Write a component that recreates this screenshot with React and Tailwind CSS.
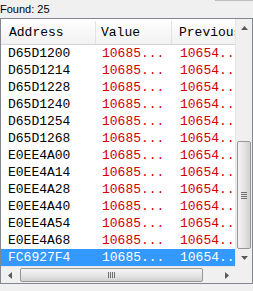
import React from "react";

const rows = [
  "D65D1200",
  "D65D1214",
  "D65D1228",
  "D65D1240",
  "D65D1254",
  "D65D1268",
  "E0EE4A00",
  "E0EE4A14",
  "E0EE4A28",
  "E0EE4A40",
  "E0EE4A54",
  "E0EE4A68",
  "FC6927F4",
];

function Arrow({ dir }) {
  const pts = {
    up: "0,4 3.5,0 7,4",
    down: "0,0 3.5,4 7,0",
    left: "4,0 0,3.5 4,7",
    right: "0,0 4,3.5 0,7",
  }[dir];
  const vertical = dir === "up" || dir === "down";
  return (
    <svg width={vertical ? 7 : 4} height={vertical ? 4 : 7} viewBox={vertical ? "0 0 7 4" : "0 0 4 7"}>
      <polygon points={pts} fill="#5a5a5a" />
    </svg>
  );
}

function VScroll() {
  return (
    <div className="flex w-[17px] flex-col bg-[#f0f0f0] border-l border-[#e6e6e6]">
      <div className="flex h-[17px] items-center justify-center">
        <Arrow dir="up" />
      </div>
      <div className="flex-1" />
      <div className="mx-[1px] flex h-[108px] flex-col items-center justify-center gap-[1px] rounded-[2px] border border-[#969696] bg-gradient-to-r from-[#f4f4f4] via-[#e6e6e6] to-[#d0d0d0]">
        <div className="h-[1px] w-[6px] bg-[#6f6f6f]" />
        <div className="h-[1px] w-[6px] bg-[#6f6f6f]" />
        <div className="h-[1px] w-[6px] bg-[#6f6f6f]" />
        <div className="h-[1px] w-[6px] bg-[#6f6f6f]" />
      </div>
      <div className="flex h-[17px] items-center justify-center">
        <Arrow dir="down" />
      </div>
    </div>
  );
}

function HScroll() {
  return (
    <div className="flex h-[17px] flex-1 bg-[#f0f0f0] border-t border-[#e6e6e6]">
      <div className="flex w-[17px] items-center justify-center">
        <Arrow dir="left" />
      </div>
      <div className="my-[1px] ml-[2px] flex w-[183px] items-center justify-center gap-[1px] rounded-[2px] border border-[#969696] bg-gradient-to-b from-[#f4f4f4] via-[#e6e6e6] to-[#d0d0d0]">
        <div className="h-[6px] w-[1px] bg-[#6f6f6f]" />
        <div className="h-[6px] w-[1px] bg-[#6f6f6f]" />
        <div className="h-[6px] w-[1px] bg-[#6f6f6f]" />
        <div className="h-[6px] w-[1px] bg-[#6f6f6f]" />
      </div>
      <div className="flex-1" />
      <div className="flex w-[17px] items-center justify-center">
        <Arrow dir="right" />
      </div>
    </div>
  );
}

export default function App() {
  return (
    <div className="h-[291px] w-[253px] overflow-hidden bg-[#f0f0f0] font-['Liberation_Sans',sans-serif]">
      <div className="flex h-[18px] items-start">
        <span className="mt-[3px] text-[11px] leading-[13px] text-black">Found: 25</span>
        <div className="ml-auto w-[38px] border-t border-[#bdbdbd]" />
      </div>

      <div className="flex h-[266px] w-[253px] flex-col border border-[#828790] bg-white">
        <div className="flex min-h-0 flex-1">
          <div className="flex min-w-0 flex-1 flex-col overflow-hidden font-['Liberation_Mono',monospace] text-[13px]">
            <div className="flex h-[26px] shrink-0 items-center border-b border-[#d5d5d5] bg-gradient-to-b from-white to-[#f2f2f2] pt-[2px] text-black">
              <div className="flex h-full w-[95px] shrink-0 items-center border-r border-[#e3e3e3] pl-[8px]">Address</div>
              <div className="flex h-full w-[76px] shrink-0 items-center border-r border-[#e3e3e3] pl-[5px]">Value</div>
              <div className="flex h-full flex-1 items-center overflow-hidden whitespace-nowrap pl-[7px]">Previous</div>
            </div>
            {rows.map((addr, i) => {
              const sel = i === rows.length - 1;
              return (
                <div
                  key={addr}
                  className={`flex h-[17px] shrink-0 items-center whitespace-nowrap ${sel ? "bg-[#3399ff] text-white" : ""}`}
                >
                  <div className={`w-[95px] shrink-0 pl-[7px] ${sel ? "text-white" : "text-black"}`}>{addr}</div>
                  <div className={`w-[76px] shrink-0 pl-[6px] ${sel ? "text-white" : "text-[#d00000]"}`}>10685...</div>
                  <div className={`flex-1 overflow-hidden pl-[8px] ${sel ? "text-white" : "text-[#d00000]"}`}>10654..</div>
                </div>
              );
            })}
          </div>
          <VScroll />
        </div>
        <div className="flex h-[17px] shrink-0">
          <HScroll />
          <div className="w-[17px] bg-[#f0f0f0]" />
        </div>
      </div>
    </div>
  );
}
